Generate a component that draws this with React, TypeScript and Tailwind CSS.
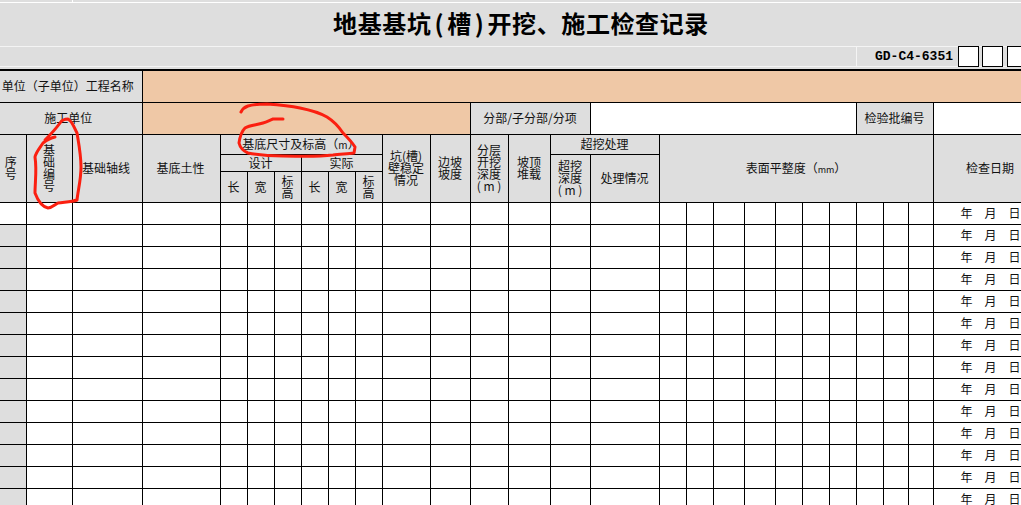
const cols = [26, 46, 70, 78, 27, 27, 27, 27, 27, 27, 48, 40, 38, 42, 40, 69, 27, 27, 31, 31, 27, 27, 27, 27, 25, 25, 109];
const g = "bg-[#dedede] border border-black text-center align-middle p-0 overflow-hidden font-normal";
const w = "bg-white border border-black p-0";
const o = "bg-[#efc8a6] border border-black p-0";
const tall = "block leading-[12px] mx-auto";

function Stack({ lines }: { lines: string[] }) {
  return <span className={tall}>{lines.map((l, i) => <span key={i} className="block whitespace-nowrap">{l}</span>)}</span>;
}

export default function App() {
  const rows = Array.from({ length: 14 }, (_, i) => i);
  return (
    <div className="w-[1021px] h-[505px] overflow-hidden bg-[#dedede] font-['Noto_Sans_CJK_SC','Liberation_Sans',sans-serif] text-[12px] text-[#111] relative">
      <div className="w-[1042px]">
        <div className="h-[2px] flex">
          <div className="w-[73px] border-r border-white" />
        </div>
        <div className="h-[44px] border-t border-white flex items-center justify-center pb-[3px]">
          <h1 className="text-[24px] leading-[30px] font-bold text-black whitespace-nowrap tracking-[0.6px]">地基基坑<span className="px-[3px]">(</span>槽<span className="px-[3px]">)</span>开挖、施工检查记录</h1>
        </div>
        <div className="h-[21px] border-y border-[#f4f4f4] flex">
          <div className="w-[857px] border-r border-[#f4f4f4]" />
          <div className="flex items-center gap-[3px] pl-[18px]">
            <span className="font-['Liberation_Mono',monospace] font-bold text-[13px] leading-[20px] w-[80px] whitespace-nowrap text-black">GD-C4-6351</span>
            <span className="w-[21px] h-[21px] bg-white border border-black" />
            <span className="w-[21px] h-[21px] bg-white border border-black" />
            <span className="w-[21px] h-[21px] bg-white border border-black ml-[1px]" />
          </div>
        </div>
        <div className="h-[2px]" />
        <div className="h-[2px] bg-black" />
        <table className="table-fixed border-collapse w-[1042px]">
          <colgroup>
            {cols.map((c, i) => <col key={i} style={{ width: c }} />)}
          </colgroup>
          <tbody>
            <tr className="h-[31px]">
              <th colSpan={3} className={g + " border-t-0 border-l-0 whitespace-nowrap pr-[6px]"}>单位（子单位）工程名称</th>
              <td colSpan={24} className={o + " border-t-0"} />
            </tr>
            <tr className="h-[32px]">
              <th colSpan={3} className={g + " border-l-0 pr-[5px]"}>施工单位</th>
              <td colSpan={9} className={o} />
              <th colSpan={3} className={g}>分部/子分部/分项</th>
              <td colSpan={8} className={w} />
              <th colSpan={3} className={g}>检验批编号</th>
              <td className={w} />
            </tr>
            <tr className="h-[20px]">
              <th rowSpan={3} className={g + " border-l-0 pr-[4px]"}><Stack lines={["序", "号"]} /></th>
              <th rowSpan={3} className={g}><Stack lines={["基", "础", "编", "号"]} /></th>
              <th rowSpan={3} className={g + " pr-[2px]"}>基础轴线</th>
              <th rowSpan={3} className={g + " pr-[1px]"}>基底土性</th>
              <th colSpan={6} className={g}>基底尺寸及标高（<span className="text-[10px]">m</span>）</th>
              <th rowSpan={3} className={g}><Stack lines={["坑(槽)", "壁稳定", "情况"]} /></th>
              <th rowSpan={3} className={g}><Stack lines={["边坡", "坡度"]} /></th>
              <th rowSpan={3} className={g}><Stack lines={["分层", "开挖", "深度", "( m )"]} /></th>
              <th rowSpan={3} className={g}><Stack lines={["坡顶", "堆载"]} /></th>
              <th colSpan={2} className={g}>超挖处理</th>
              <th rowSpan={3} colSpan={10} className={g}>表面平整度（<span className="text-[9px]">mm</span>）</th>
              <th rowSpan={3} className={g + " pl-[5px]"}>检查日期</th>
            </tr>
            <tr className="h-[17px]">
              <th colSpan={3} className={g + " leading-[16px]"}>设计</th>
              <th colSpan={3} className={g + " leading-[16px]"}>实际</th>
              <th rowSpan={2} className={g}><Stack lines={["超挖", "深度", "( m )"]} /></th>
              <th rowSpan={2} className={g}>处理情况</th>
            </tr>
            <tr className="h-[31px]">
              <th className={g}>长</th>
              <th className={g}>宽</th>
              <th className={g}><Stack lines={["标", "高"]} /></th>
              <th className={g}>长</th>
              <th className={g}>宽</th>
              <th className={g}><Stack lines={["标", "高"]} /></th>
            </tr>
            {rows.map((r) => (
              <tr key={r} className="h-[22px]">
                <td className={(r === 0 ? w : g) + " border-l-0"} />
                {cols.slice(1, -1).map((_, i) => <td key={i} className={w} />)}
                <td className={w + " whitespace-nowrap pl-[27px] leading-[20px]"}>
                  <span className="inline-block w-[24px]">年</span>
                  <span className="inline-block w-[24px]">月</span>
                  <span>日</span>
                </td>
              </tr>
            ))}
          </tbody>
        </table>
      </div>
      <svg className="absolute left-0 top-0 pointer-events-none" width="1021" height="505" fill="none" stroke="#fb1f10" strokeWidth="3" strokeLinecap="round" strokeLinejoin="round">
        <path d="M55 137 C50 138 47 140 43 143 C39 149 36 152 35 157 C37 170 35 182 35 193 C38 201 43 207 48 208 C52 208 54 205 58 203 C65 202 72 202 77 200 C78 190 81 180 81 167 C81 155 79 145 77 133 C74 127 72 121 68 119 C65 119 62 120 60 123 C55 130 50 135 45 140" />
        <path d="M241 112 C243 108 245 107 248 106 C255 104 260 104 267 104 C280 105 290 106 300 108 C310 110 320 113 327 117 C335 122 339 127 343 133 C348 138 352 142 355 147 L354 153 C348 154 340 154 333 155 C315 157 300 156 283 156 C270 156 258 155 248 153 C243 151 240 147 239 143 C240 136 242 131 245 128 C250 125 257 125 263 123 C267 122 270 120 273 119 C277 119 280 119 283 119" />
      </svg>
    </div>
  );
}
